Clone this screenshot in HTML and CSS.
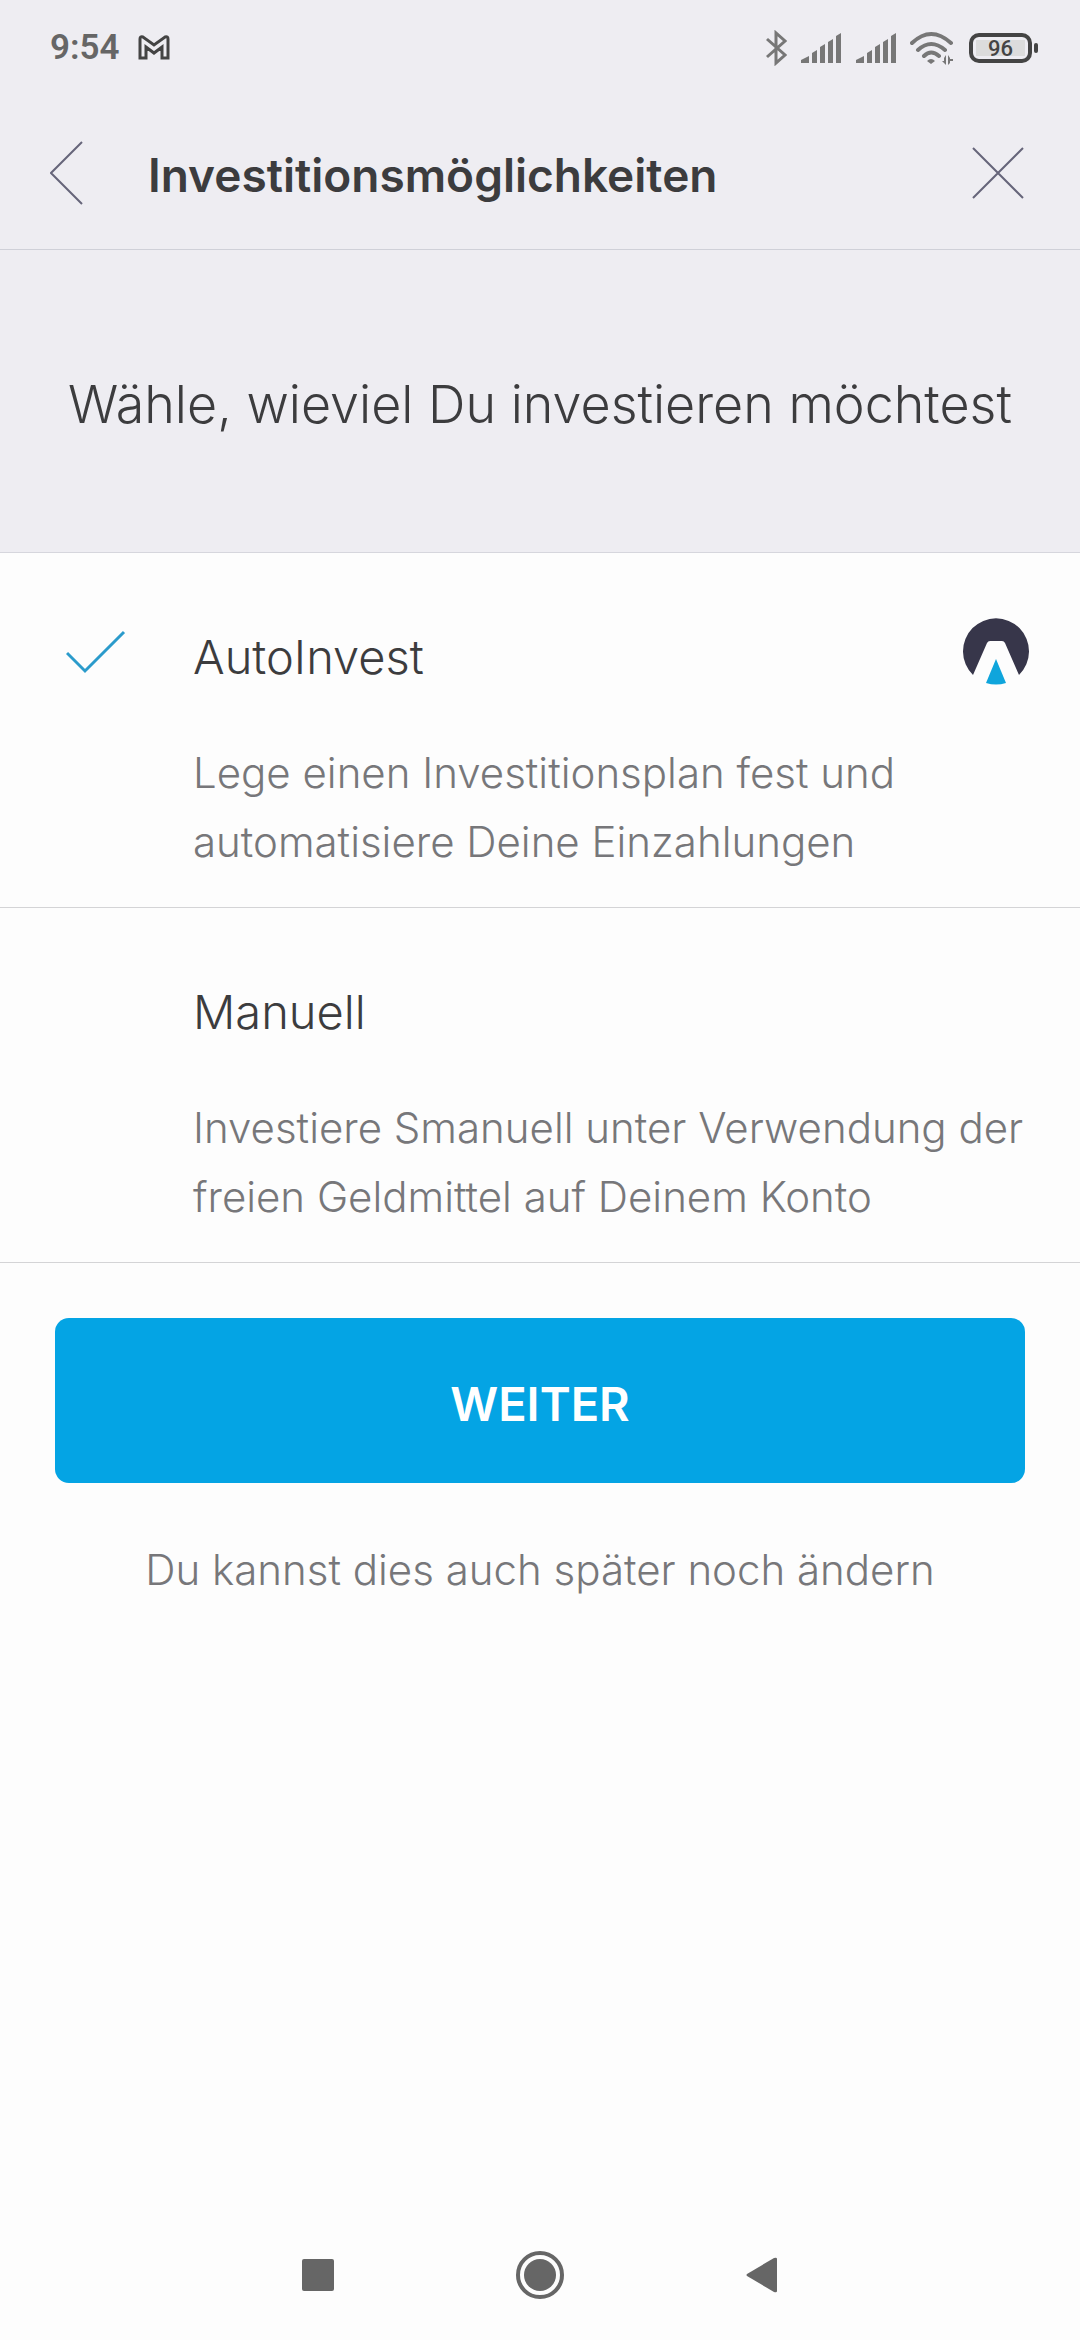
FILE: index.html
```html
<!DOCTYPE html>
<html lang="de">
<head>
    <meta charset="UTF-8">
    <meta name="viewport" content="width=device-width, initial-scale=1.0">
    <title>Investitionsmöglichkeiten</title>
    <link rel="stylesheet" href="styles.css">
</head>
<body>
    <div class="app">
        <div class="status-bar">
            <span class="time">9:54</span>
            <svg class="mail-icon" width="32" height="26" viewBox="0 0 32 26">
                <path d="M2 23V4Q2 1 5 2L16 10L27 2Q30 1 30 4V23H24V12L16 18L8 12V23Z"/>
            </svg>
            <div class="status-icons">
                <svg width="22" height="36" viewBox="0 0 22 36">
                    <path class="line" d="M2 9L20 25L11 33V3L20 11L2 27"/>
                </svg>
                <svg width="42" height="30" viewBox="0 0 42 30">
                    <path d="M1 30V27L9 23V30ZM12 30V20L17 17V30ZM20 30V14L25 11V30ZM28 30V9L33 6V30ZM36 30V3L41 0V30Z"/>
                </svg>
                <svg width="42" height="30" viewBox="0 0 42 30">
                    <path d="M1 30V27L9 23V30ZM12 30V20L17 17V30ZM20 30V14L25 11V30ZM28 30V9L33 6V30ZM36 30V3L41 0V30Z"/>
                </svg>
                <svg class="wifi-icon" width="44" height="34" viewBox="0 0 44 34">
                    <path class="arc" d="M2 12Q21 -6 41 12M8 19Q21 7 35 19M14 25Q21 18 29 25"/>
                    <path d="M17 30Q21 26 25 30L21 33Z"/>
                    <path d="M36 24V34L32 30H34V27ZM38 34V24L40 27V28H43V30H40V32Z"/>
                </svg>
                <div class="battery"><span>96</span></div>
            </div>
        </div>
        <header class="header">
            <button type="button" class="icon-button" aria-label="Zurück">
                <svg width="34" height="64" viewBox="0 0 34 64"><path d="M32 1L1 32L32 63"/></svg>
            </button>
            <h1>Investitionsmöglichkeiten</h1>
            <button type="button" class="icon-button" aria-label="Schließen">
                <svg width="52" height="52" viewBox="0 0 52 52"><path d="M1 1L51 51M51 1L1 51"/></svg>
            </button>
        </header>
        <form class="content">
            <h2 class="intro">Wähle, wieviel Du investieren möchtest</h2>
            <label class="option">
                <input type="radio" name="plan" value="auto" checked>
                <svg class="check" width="60" height="44" viewBox="0 0 60 44"><path d="M1 23L19 41L58 2"/></svg>
                <span class="option-title">AutoInvest</span>
                <svg class="logo" width="68" height="68" viewBox="0 0 68 68">
                    <path class="logo-ring" d="M11 58A33 33 0 1 1 57 58L43 26Q42 24 40 24H28Q26 24 25 26Z"/>
                    <path class="logo-drop" d="M34 42L44 66Q34 69 24 66Z"/>
                </svg>
                <span class="option-text">Lege einen Investitionsplan fest und automatisiere Deine Einzahlungen</span>
            </label>
            <label class="option">
                <input type="radio" name="plan" value="manual">
                <svg class="check" width="60" height="44" viewBox="0 0 60 44"><path d="M1 23L19 41L58 2"/></svg>
                <span class="option-title">Manuell</span>
                <span class="option-text">Investiere Smanuell unter Verwendung der freien Geldmittel auf Deinem Konto</span>
            </label>
            <div class="actions">
                <button type="submit" class="next">WEITER</button>
                <p>Du kannst dies auch später noch ändern</p>
            </div>
        </form>
        <nav class="nav-bar">
            <button type="button" class="icon-button" aria-label="Übersicht">
                <svg width="32" height="32" viewBox="0 0 32 32"><rect width="32" height="32" rx="2"/></svg>
            </button>
            <button type="button" class="icon-button" aria-label="Startseite">
                <svg width="50" height="50" viewBox="0 0 50 50"><circle cx="25" cy="25" r="16"/><circle class="ring" cx="25" cy="25" r="22"/></svg>
            </button>
            <button type="button" class="icon-button" aria-label="Zurück">
                <svg width="32" height="36" viewBox="0 0 32 36"><path d="M1 17L28 1Q31 0 31 2V34Q31 36 28 35L1 19Q0 18 1 17Z"/></svg>
            </button>
        </nav>
    </div>
</body>
</html>
```
FILE: styles.css
```css
* {
    box-sizing: border-box;
}
body {
    margin: 0;
    font-family: Inter, "Liberation Sans", sans-serif;
    font-weight: 300;
    background-color: #fdfdfd;
    color: #3c3c3e;
}
svg {
    display: block;
    flex-shrink: 0;
}
h1, h2, p {
    margin: 0;
}
.app {
    display: flex;
    flex-direction: column;
    min-height: 100vh;
}
.status-bar {
    display: flex;
    align-items: center;
    gap: 18px;
    height: 96px;
    padding: 0 44px 0 50px;
    background-color: #eeedf2;
    font-family: Roboto, sans-serif;
}
.time {
    font-size: 35px;
    font-weight: 600;
    line-height: 40px;
    color: #666;
}
.mail-icon {
    fill: none;
    stroke: #444;
    stroke-width: 3;
}
.status-icons {
    display: flex;
    align-items: center;
    gap: 13px;
    margin-left: auto;
    fill: #777;
}
.line, .arc {
    fill: none;
    stroke: #777;
    stroke-width: 3;
}
.arc {
    stroke-width: 4;
    stroke-linecap: round;
}
.battery {
    position: relative;
    width: 63px;
    height: 30px;
    margin: 0 4px 0 2px;
    padding: 3px;
    border: 4px solid #444;
    border-radius: 10px;
}
.battery span {
    display: block;
    height: 16px;
    background-color: #dcdcdc;
    color: #444;
    font-size: 22px;
    font-weight: 500;
    line-height: 17px;
    text-align: center;
}
.battery::after {
    content: "";
    position: absolute;
    top: 6px;
    right: -10px;
    width: 4px;
    height: 10px;
    border-radius: 2px;
    background-color: #444;
}
.header {
    display: flex;
    align-items: center;
    height: 154px;
    padding: 0 56px 0 50px;
    border-bottom: 1px solid #cfd0d8;
    background-color: #eeedf2;
}
.header h1 {
    flex: 1;
    margin-left: 64px;
    padding-top: 4px;
    font-size: 46px;
    font-weight: 600;
    line-height: 60px;
}
.icon-button {
    padding: 0;
    border: none;
    background: none;
    cursor: pointer;
}
.header svg {
    fill: none;
    stroke: #66657a;
    stroke-width: 2;
}
.content {
    flex: 1;
}
.intro {
    padding: 124px 40px 116px;
    border-bottom: 1px solid #d6d6dd;
    background-color: #eeedf2;
    font-size: 52px;
    font-weight: 300;
    line-height: 62px;
    text-align: center;
}
.option {
    display: grid;
    grid-template-columns: 127px 1fr auto;
    row-gap: 36px;
    padding: 64px 50px 31px 66px;
    border-bottom: 1px solid #d4d4d6;
    cursor: pointer;
}
.option input {
    position: absolute;
    opacity: 0;
}
.check {
    grid-column: 1;
    margin-top: 13px;
    fill: none;
    stroke: #2b9bcb;
    stroke-width: 3;
    visibility: hidden;
}
.option input:checked + .check {
    visibility: visible;
}
.option-title {
    grid-column: 2;
    height: 85px;
    font-size: 47px;
    line-height: 80px;
}
.logo-ring {
    fill: #37364a;
}
.logo-drop {
    fill: #0fa5dc;
}
.option-text {
    grid-column: 2 / 4;
    color: #77777a;
    font-size: 42px;
    line-height: 69px;
}
.actions {
    padding: 55px;
    text-align: center;
}
.next {
    width: 100%;
    height: 165px;
    padding: 6px 0 0;
    border: none;
    border-radius: 14px;
    background-color: #04a4e4;
    color: #fff;
    font-family: inherit;
    font-size: 47px;
    font-weight: 600;
    cursor: pointer;
}
.actions p {
    margin-top: 52px;
    color: #77777a;
    font-size: 42px;
    line-height: 69px;
}
.nav-bar {
    display: flex;
    align-items: center;
    justify-content: space-between;
    height: 130px;
    padding: 0 28%;
    fill: #666;
}
.ring {
    fill: none;
    stroke: #666;
    stroke-width: 4;
}
```
